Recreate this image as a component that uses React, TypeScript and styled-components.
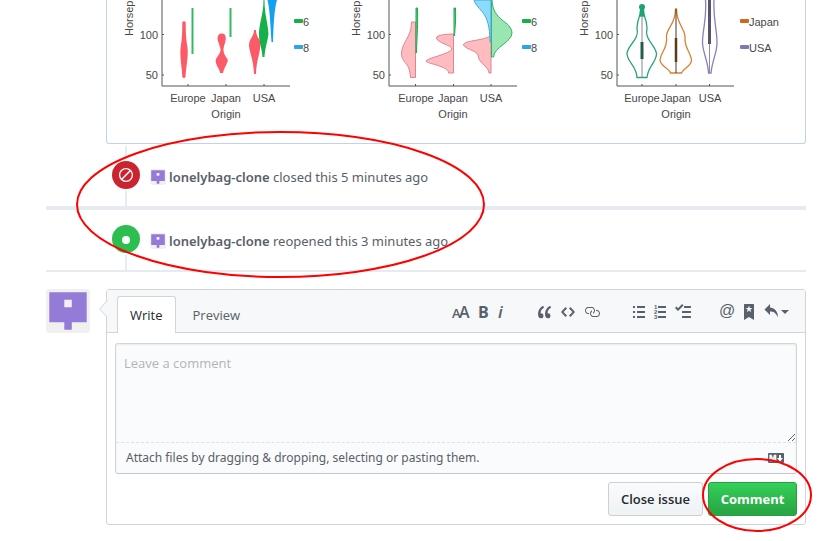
import React, { useState } from "react";
import styled, { createGlobalStyle } from "styled-components";

const GlobalStyle = createGlobalStyle`
  * { box-sizing: border-box; }
  body {
    margin: 0;
    background: #fff;
    color: #586069;
    font-family: "Open Sans", "Noto Sans", sans-serif;
    font-size: 13px;
    line-height: 20px;
  }
  button, textarea { font: inherit; }
`;

const Page = styled.main`
  padding: 0 31px 16px 46px;
`;

const ChartComment = styled.section`
  display: flex;
  margin-left: 60px;
  border: 1px solid #c0d3eb;
  border-top: 0;
  border-radius: 0 0 3px 3px;
  overflow: hidden;
`;

const Chart = styled.svg`
  display: block;
  flex: none;
  height: 143px;
  font-family: "Liberation Sans", Arial, sans-serif;
  font-size: 11px;
  fill: #484848;
`;

const Timeline = styled.section`
  position: relative;
  padding-top: 2px;
`;

const Event = styled.div<{ $rule: number }>`
  display: flex;
  align-items: flex-start;
  height: ${(p) => 60 + p.$rule}px;
  border-bottom: ${(p) => p.$rule}px solid #e6ebf1;
`;

const Rail = styled.div`
  display: flex;
  flex-direction: column;
  align-items: center;
  gap: 2px;
  width: 28px;
  height: 60px;
  margin-left: 66px;
`;

const RailLine = styled.span<{ $height: number; $hidden?: boolean }>`
  height: ${(p) => p.$height}px;
  width: 2px;
  background: ${(p) => (p.$hidden ? "transparent" : "#e6ebf1")};
`;

const Badge = styled.span<{ $color: string }>`
  display: flex;
  align-items: center;
  justify-content: center;
  width: 28px;
  height: 28px;
  border-radius: 50%;
  background: ${(p) => p.$color};
  color: #fff;
`;

const EventText = styled.p`
  display: flex;
  align-items: center;
  gap: 3px;
  margin: 21px 0 0 10px;
  font-family: "Noto Sans", "Open Sans", sans-serif;
  white-space: pre;
`;

const Author = styled.a`
  color: #586069;
  font-weight: 600;
  text-decoration: none;
`;

const AvatarSvg = styled.svg`
  display: block;
  flex: none;
  border-radius: 3px;
`;

const Ring = styled.svg`
  position: absolute;
  overflow: visible;
  pointer-events: none;
  fill: none;
  stroke: #f00;
  stroke-width: 2;
`;

const TimelineRing = styled(Ring)`
  left: 31px;
  top: -12px;
`;

const ButtonRing = styled(Ring)`
  left: -5px;
  top: -23px;
`;

const Reply = styled.section`
  display: flex;
  align-items: flex-start;
  gap: 16px;
  margin-top: 17px;
`;

const Form = styled.form`
  position: relative;
  flex: 1;
  min-width: 0;
  border: 1px solid #d1d5da;
  border-radius: 3px;
`;

const Pointer = styled.svg`
  position: absolute;
  left: -8px;
  top: 11px;
`;

const FormHead = styled.header`
  display: flex;
  align-items: flex-end;
  gap: 4px;
  height: 43px;
  padding: 0 16px 0 10px;
  border-bottom: 1px solid #d1d5da;
  background: #f6f8fa;
`;

const Tab = styled.button<{ $active: boolean }>`
  height: 37px;
  margin-bottom: -1px;
  padding: 0 12px;
  border: 1px solid ${(p) => (p.$active ? "#d1d5da" : "transparent")};
  border-bottom: 0;
  border-radius: 3px 3px 0 0;
  background: ${(p) => (p.$active ? "#fff" : "transparent")};
  color: ${(p) => (p.$active ? "#24292e" : "#586069")};
`;

const Toolbar = styled.div`
  display: flex;
  align-items: center;
  height: 42px;
  padding-top: 2px;
  margin-left: auto;
`;

const ToolGroup = styled.div<{ $lead?: number; $gap: number }>`
  display: flex;
  gap: ${(p) => p.$gap}px;
  margin-left: ${(p) => p.$lead ?? 0}px;
`;

const Tool = styled.button`
  display: flex;
  align-items: center;
  gap: 3px;
  height: 16px;
  padding: 0;
  border: 0;
  background: none;
  color: #586069;
`;

const Icon = styled.svg`
  display: block;
  overflow: visible;
  fill: currentColor;
`;

const Editor = styled.div`
  margin: 10px 8px 8px;
  border: 1px solid #d1d5da;
  border-bottom-color: #c3c8cf;
  border-radius: 3px;
  background: #fafbfc;
  box-shadow: inset 0 1px 2px rgba(27, 31, 35, 0.075);
`;

const TextArea = styled.textarea`
  display: block;
  width: 100%;
  height: 98px;
  padding: 9px 8px;
  border: 0;
  outline: 0;
  background: transparent;
  color: #24292e;
  resize: vertical;
  &::placeholder { color: #b0b5bb; }
`;

const AttachBar = styled.div`
  display: flex;
  align-items: center;
  justify-content: space-between;
  height: 31px;
  padding: 0 12px 0 10px;
  border-top: 1px dashed #dfe2e5;
  font-family: "Noto Sans", "Open Sans", sans-serif;
  font-size: 12px;
`;

const Actions = styled.div`
  display: flex;
  justify-content: flex-end;
  gap: 5px;
  padding: 0 8px 8px;
`;

const ButtonWrap = styled.div`
  position: relative;
`;

const Button = styled.button<{ $primary?: boolean }>`
  height: 34px;
  min-width: 89px;
  padding: 0 ${(p) => (p.$primary ? 11 : 12)}px;
  border: 1px solid ${(p) => (p.$primary ? "#279f43" : "#cdcfd1")};
  border-radius: 3px;
  background: ${(p) => (p.$primary ? "linear-gradient(#34d058, #28a745 90%)" : "linear-gradient(#fafbfc, #eff3f6 90%)")};
  color: ${(p) => (p.$primary ? "#fff" : "#24292e")};
  font-weight: ${(p) => (p.$primary ? 700 : 600)};
`;

function Avatar({ size }: { size: number }) {
  return (
    <AvatarSvg width={size} height={size} viewBox="0 0 44 44" role="img" aria-label="@lonelybag-clone">
      <rect width="44" height="44" fill="#f0f0f0" />
      <path fill="#957bd8" fillRule="evenodd" d="M3.3 3.3h37.4v29.9H25.8v7.5h-7.5v-7.5h-15zM18.3 10.8v7.5h7.5v-7.5z" />
    </AvatarSvg>
  );
}

function Glyph({ w, d }: { w: number; d: string }) {
  return (
    <Icon width={w} height="16" viewBox={`0 0 ${w} 16`} aria-hidden="true">
      <path fillRule="evenodd" d={d} />
    </Icon>
  );
}

const paths = {
  quote: "M6.16 3.5C3.73 5.06 2.55 6.67 2.55 9.36c.16-.05.3-.05.44-.05 1.27 0 2.5.86 2.5 2.41 0 1.61-1.03 2.61-2.5 2.61-1.9 0-2.99-1.52-2.99-4.25 0-3.8 1.75-6.53 5.02-8.42L6.16 3.5zm7 0c-2.43 1.56-3.61 3.17-3.61 5.86.16-.05.3-.05.44-.05 1.27 0 2.5.86 2.5 2.41 0 1.61-1.03 2.61-2.5 2.61-1.89 0-2.98-1.52-2.98-4.25 0-3.8 1.75-6.53 5.02-8.42l1.14 1.84h-.01z",
  code: "M9.5 3L8 4.5 11.5 8 8 11.5 9.5 13 14 8 9.5 3zm-5 0L0 8l4.5 5L6 11.5 2.5 8 6 4.5 4.5 3z",
  link: "M4 9h1v1H4c-1.5 0-3-1.69-3-3.5S2.55 3 4 3h4c1.45 0 3 1.69 3 3.5 0 1.41-.91 2.72-2 3.25V8.59c.58-.45 1-1.27 1-2.09C10 5.22 8.98 4 8 4H4c-.98 0-2 1.22-2 2.5S3 9 4 9zm9-3h-1v1h1c1 0 2 1.22 2 2.5S13.98 12 13 12H9c-.98 0-2-1.22-2-2.5 0-.83.42-1.64 1-2.09V6.25c-1.09.53-2 1.84-2 3.25C6 11.31 7.55 13 9 13h4c1.45 0 3-1.69 3-3.5S14.5 6 13 6z",
  list: "M0 2h2v2H0zM4 2h8v2H4zM0 7h2v2H0zM4 7h8v2H4zM0 12h2v2H0zM4 12h8v2H4z",
  task: "M15.41 9H7.59C7 9 7 8.59 7 8c0-.59 0-1 .59-1h7.81c.59 0 .59.41.59 1 0 .59 0 1-.59 1h.01zM9.59 4C9 4 9 3.59 9 3c0-.59 0-1 .59-1h5.81c.59 0 .59.41.59 1 0 .59 0 1-.59 1H9.59zM0 3.91l1.41-1.3L3 4.2 7.09 0 8.5 1.41 3 6.91l-3-3zM7.59 12h7.81c.59 0 .59.41.59 1 0 .59 0 1-.59 1H7.59C7 14 7 13.59 7 13c0-.59 0-1 .59-1z",
  bookmark: "M9 0H1C.27 0 0 .27 0 1v15l5-3.09L10 16V1c0-.73-.27-1-1-1zm-.78 4.25L6.36 5.61l.72 2.16c.06.22-.02.28-.2.17L5 6.6 3.12 7.94c-.19.11-.25.05-.2-.17l.72-2.16-1.86-1.36c-.17-.16-.14-.23.09-.23l2.3-.03.7-2.16h.25l.7 2.16 2.3.03c.24 0 .27.08.09.23h.01z",
  reply: "M6 3.5c3.92.44 8 3.125 8 10-2.312-5.062-4.75-6-8-6V11L.5 5.5 6 0v3.5z",
  slash: "M7 1C3.14 1 0 4.14 0 8s3.14 7 7 7 7-3.14 7-7-3.14-7-7-7zm0 1.3c1.3 0 2.5.44 3.47 1.17l-8 8A5.755 5.755 0 0 1 1.3 8c0-3.14 2.56-5.7 5.7-5.7zm0 11.41c-1.3 0-2.5-.44-3.47-1.17l8-8c.73.97 1.17 2.17 1.17 3.47 0 3.14-2.56 5.7-5.7 5.7z",
};

interface AxisProps {
  x: number;
  width: number;
  ticks: number[];
  labels: number[];
}

function Axes({ x, width, ticks, labels }: AxisProps) {
  return (
    <>
      <path d={`M${x} 0V86H${x + width}M${x} 34.5h2M${x} 75h2${ticks.map((t) => `M${t} 86v-2`).join("")}`} fill="none" stroke="#555" />
      <text x={x - 4} y="39" textAnchor="end">100</text>
      <text x={x - 4} y="79" textAnchor="end">50</text>
      <text transform={`translate(${x - 29} 36) rotate(-90)`}>Horsep</text>
      {["Europe", "Japan", "USA"].map((name, i) => (
        <text key={name} x={labels[i]} y="102" textAnchor="middle">{name}</text>
      ))}
      <text x={labels[3]} y="118" textAnchor="middle">Origin</text>
    </>
  );
}

function Legend({ x, y, color, label }: { x: number; y: number; color: string; label: string }) {
  return (
    <>
      <rect x={x} y={y - 2} width="9" height="4" rx="1" fill={color} />
      <text x={x + 9} y={y + 5}>{label}</text>
    </>
  );
}

function ChartRow() {
  return (
    <ChartComment>
      <Chart width="233" viewBox="107 0 233 143" role="img" aria-label="Horsepower by origin, grouped by cylinders">
        <Axes x={162} width={128} ticks={[188, 226, 264]} labels={[188, 226, 264, 226]} />
        <path fill="#fb5a66" d="M182.300 22Q184 20.500 185.700 22C185.700 32 186 39 187.500 47C188.500 57 186 67 185.500 77Q184 79 182.300 77C182 67 179.500 57 180.700 47C182 39 182.300 32 182.300 22z" />
        <path fill="#fb5a66" d="M221.500 33.500C226 33 226.500 38 225 43C223.500 47 223 50 224 53C225 57 228 58 227.800 61C226 66 223.500 69 223 73H220C220 69 216 66 215.600 61C216 57 219 56 220.500 51C221 47 217.500 42 217.500 38Q218 33.500 221.500 33.500z" />
        <path fill="#fb5a66" d="M254 30H256C256 37 260 38 260.500 44C260 54 256.500 60 256 74H254C253.500 60 250 54 249 46C249 38 254 37 254 30z" />
        <path fill="#16b04b" d="M263.500 0C263.500 15 259 23 259 34C259 43 262 48 262.500 57H264.500C265 48 267.500 42 268.500 34C268 23 264.500 15 264.500 0z" />
        <path fill="#12a0f5" d="M267.500 0C270 10 270.500 27 271.500 42H273C273.500 27 274 10 277 0z" />
        <path stroke="#35b765" strokeWidth="2" d="M192.500 8v46M230.500 8v29" />
        <Legend x={294} y={21} color="#16b04b" label="6" />
        <Legend x={294} y={47} color="#2ba5e8" label="8" />
      </Chart>
      <Chart width="227" viewBox="340 0 227 143" role="img" aria-label="Horsepower by origin, half violins">
        <Axes x={389} width={128} ticks={[415.5, 453.5, 491]} labels={[416, 453, 491, 453]} />
        <path fill="#ffbcc0" stroke="#de8490" d="M415.500 22H411.500C411.500 38 401.500 42 401.500 54C402 64 409.500 61 410.500 77.500H415.500z" />
        <path fill="#ffbcc0" stroke="#de8490" d="M453.500 34C447 34 436 35 436.500 38C437 43 452 45 452 49C450 54 427 58 426 61C427 64 449 66 448.500 73H453.500z" />
        <path fill="#ffbcc0" stroke="#de8490" d="M491 35C486 41 463 40 463.500 45C466 50 478 50 478.500 57C479 63 489 67 489 73H491z" />
        <path fill="#9ae6b3" stroke="#35b060" d="M491.500 0V57H493.500C494 47 512 42 512 33C511 20 493 22 492 0z" />
        <path fill="#8bdcfc" stroke="#46a7d9" d="M474 0C478 12 490 10 490 42H491V0z" />
        <path fill="#4fca78" stroke="#22a64d" d="M416 8V53M416 8H417.500C418 25 417 34 416.500 53M454 8V36M454 8H455.500C456 22 455 28 454.500 36" />
        <Legend x={522} y={21} color="#16b04b" label="6" />
        <Legend x={522} y={47} color="#2ba5e8" label="8" />
      </Chart>
      <Chart width="238" viewBox="567 0 238 143" role="img" aria-label="Horsepower by origin, box violins">
        <Axes x={617} width={117} ticks={[642, 676, 709.5]} labels={[642, 676, 710, 676]} />
        <path fill="#fff" stroke="#27a47d" strokeWidth="1.300" d="M639.500 16C638 20 637 23 637 28C640 40 627 45 627 54C628 63 636.500 66 637 77.500H647C648 66 656 63 656.500 54C656 45 644 40 647 28C647 23 646 20 644.500 16z" />
        <circle cx="642" cy="7" r="3" fill="#20a077" />
        <path d="M640 9h4l1 7h-6z" fill="#20a077" />
        <path stroke="#8a858b" d="M642 16v61" />
        <path stroke="#275d50" strokeWidth="3" d="M642 42v17" />
        <path fill="#fff" stroke="#d78130" strokeWidth="1.300" d="M675.500 9C675.500 25 667 27 666.500 36C668 49 660.500 52 660 60C660 66 669 68 670.500 73H681.500C684 68 691.500 66 691.500 60C691 52 684 49 685 36C684 27 677 25 676.500 9z" />
        <path stroke="#46382a" d="M676 9v64" />
        <path stroke="#5b3a17" strokeWidth="2.500" d="M676 38v24" />
        <path fill="#fff" stroke="#8a80b8" strokeWidth="1.300" d="M705.500 0C707 20 702.500 28 702.500 43C703 53 708 61 708.500 73H711C712 61 717 53 717 43C717 28 713 20 714 0" />
        <path stroke="#8f8b98" d="M709.500 0v73" />
        <path stroke="#5b5471" strokeWidth="3" d="M709.500 0v44" />
        <Legend x={740} y={21} color="#d1661c" label="Japan" />
        <Legend x={740} y={47} color="#8277b6" label="USA" />
      </Chart>
    </ChartComment>
  );
}

export default function App() {
  const [tab, setTab] = useState("Write");
  return (
    <>
      <GlobalStyle />
      <Page>
        <ChartRow />
        <Timeline>
          <Event $rule={4}>
            <Rail>
              <RailLine $height={13} />
              <Badge $color="#cb2431"><Glyph w={14} d={paths.slash} /></Badge>
              <RailLine $height={15} />
            </Rail>
            <EventText>
              <Avatar size={16} />
              <span><Author href="#">lonelybag-clone</Author> closed this 5 minutes ago</span>
            </EventText>
          </Event>
          <Event $rule={2}>
            <Rail>
              <RailLine $height={13} $hidden />
              <Badge $color="#2cbe4e">
                <Icon width="8" height="16" viewBox="0 0 8 16" aria-hidden="true"><circle cx="4" cy="9" r="4" /></Icon>
              </Badge>
              <RailLine $height={15} />
            </Rail>
            <EventText>
              <Avatar size={16} />
              <span><Author href="#">lonelybag-clone</Author> reopened this 3 minutes ago</span>
            </EventText>
          </Event>
          <TimelineRing width="407" height="145" viewBox="0 0 407 145" aria-hidden="true">
            <ellipse cx="203.500" cy="72.500" rx="203.500" ry="72.500" />
          </TimelineRing>
        </Timeline>
        <Reply>
          <Avatar size={44} />
          <Form onSubmit={(e) => e.preventDefault()}>
            <FormHead>
              {["Write", "Preview"].map((name) => (
                <Tab key={name} type="button" $active={tab === name} onClick={() => setTab(name)}>{name}</Tab>
              ))}
              <Toolbar>
                <ToolGroup $gap={9}>
                  <Tool type="button" aria-label="Add header text">
                    <Icon width="18" height="16" viewBox="0 0 18 16" fontFamily="Open Sans" fontWeight="600">
                      <text x="0" y="14" fontSize="13">A</text>
                      <text x="7" y="14" fontSize="16">A</text>
                    </Icon>
                  </Tool>
                  <Tool type="button" aria-label="Add bold text">
                    <Icon width="10" height="16" viewBox="0 0 10 16" fontFamily="Open Sans" fontWeight="700">
                      <text x="-1" y="14" fontSize="16">B</text>
                    </Icon>
                  </Tool>
                  <Tool type="button" aria-label="Add italic text">
                    <Icon width="6" height="16" viewBox="0 0 6 16" fontFamily="Open Sans" fontWeight="600" fontStyle="italic">
                      <text x="0" y="14" fontSize="17">i</text>
                    </Icon>
                  </Tool>
                </ToolGroup>
                <ToolGroup $gap={9} $lead={34}>
                  <Tool type="button" aria-label="Insert a quote"><Glyph w={14} d={paths.quote} /></Tool>
                  <Tool type="button" aria-label="Insert code"><Glyph w={14} d={paths.code} /></Tool>
                  <Tool type="button" aria-label="Add a link"><Glyph w={16} d={paths.link} /></Tool>
                </ToolGroup>
                <ToolGroup $gap={9} $lead={33}>
                  <Tool type="button" aria-label="Add a bulleted list"><Glyph w={12} d={paths.list} /></Tool>
                  <Tool type="button" aria-label="Add a numbered list">
                    <Icon width="12" height="16" viewBox="0 0 12 16" fontFamily="Liberation Sans" fontSize="6" fontWeight="700">
                      <path d="M4 2h8v2H4zM4 7h8v2H4zM4 12h8v2H4z" />
                      <text x="0" y="5">1</text>
                      <text x="0" y="10">2</text>
                      <text x="0" y="15">3</text>
                    </Icon>
                  </Tool>
                  <Tool type="button" aria-label="Add a task list"><Glyph w={16} d={paths.task} /></Tool>
                </ToolGroup>
                <ToolGroup $gap={10} $lead={29}>
                  <Tool type="button" aria-label="Mention a user">
                    <Icon width="14" height="16" viewBox="0 0 14 16" fontFamily="Liberation Sans">
                      <text x="-1" y="12" fontSize="16">@</text>
                    </Icon>
                  </Tool>
                  <Tool type="button" aria-label="Reference an issue"><Glyph w={10} d={paths.bookmark} /></Tool>
                  <Tool type="button" aria-label="Insert a saved reply">
                    <Glyph w={14} d={paths.reply} />
                    <Glyph w={8} d="M0 6h8L4 10z" />
                  </Tool>
                </ToolGroup>
              </Toolbar>
            </FormHead>
            <Pointer width="8" height="16" viewBox="0 0 8 16" aria-hidden="true">
              <path d="M8 0L0.700 8L8 16" fill="#f6f8fa" stroke="#d1d5da" />
            </Pointer>
            <Editor>
              <TextArea aria-label="Comment body" placeholder="Leave a comment" />
              <AttachBar>
                <span>Attach files by dragging &amp; dropping, selecting or pasting them.</span>
                <Icon width="16" height="16" viewBox="0 0 16 16" role="img" aria-label="Markdown is supported">
                  <rect y="3" width="16" height="10" rx="1" />
                  <text x="1" y="11" fill="#fff" stroke="#fff" strokeWidth="0.400" fontFamily="Liberation Sans" fontSize="9" fontWeight="700">M</text>
                  <path d="M11 5h2v3h2l-3 3.500L9 8h2z" fill="#fff" />
                </Icon>
              </AttachBar>
            </Editor>
            <Actions>
              <Button type="button">Close issue</Button>
              <ButtonWrap>
                <Button type="submit" $primary>Comment</Button>
                <ButtonRing width="108" height="72" viewBox="0 0 108 72" aria-hidden="true">
                  <ellipse cx="54" cy="36" rx="54" ry="36" />
                </ButtonRing>
              </ButtonWrap>
            </Actions>
          </Form>
        </Reply>
      </Page>
    </>
  );
}
